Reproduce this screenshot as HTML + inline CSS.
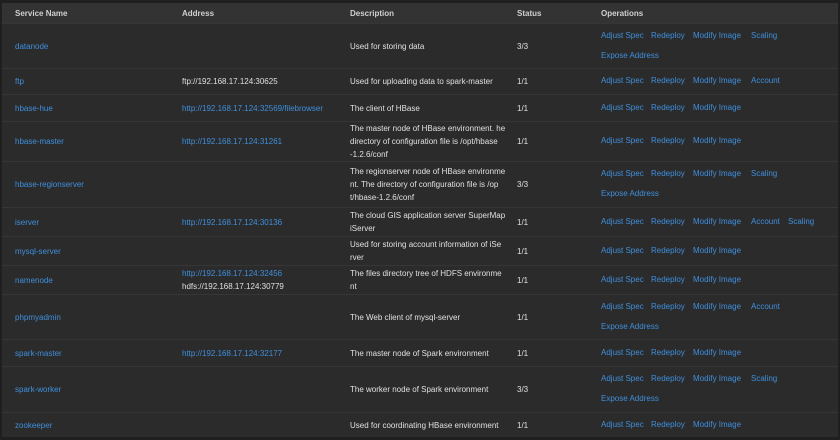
<!DOCTYPE html>
<html><head><meta charset="utf-8"><style>
*{margin:0;padding:0;box-sizing:border-box}
body{width:840px;height:440px;background:#1f1f1f;font-family:"Liberation Sans",sans-serif;font-size:8px;color:#e0e0e0;position:relative;overflow:hidden}
.wrap{position:absolute;left:2px;top:3px;width:836px;height:434px;background:#2b2b2b}
.hdr{position:absolute;left:0;top:0;width:836px;height:20px;background:#333;font-weight:bold;color:#d0d0d0}
.row{position:absolute;left:0;width:836px;border-top:1px solid #363636}
.c{position:absolute;top:0;height:100%;display:flex;align-items:center;line-height:13px;white-space:nowrap}
.n{left:13px}.a{left:180px}.d{left:348px}.s{left:515px}.o{left:599px}
a{color:#3f8fdc;text-decoration:none}
.ops{position:absolute;left:599px;top:0;height:100%;width:237px}
.ops span{position:absolute;color:#3f8fdc;line-height:13px}
</style></head><body><div class="wrap">
<div class="hdr"><div class="c n">Service Name</div><div class="c a">Address</div><div class="c d">Description</div><div class="c s">Status</div><div class="c o">Operations</div></div>
<div id="rows"></div>
</div>
<script>
var R=[
["datanode","","Used for storing data","3/3",20,65,"S",1],
["ftp","<span style='color:#e0e0e0'>ftp://192.168.17.124:30625</span>","Used for uploading data to spark-master","1/1",65,91,"A",0],
["hbase-hue","<a>http://192.168.17.124:32569/filebrowser</a>","The client of HBase","1/1",91,118,"",0],
["hbase-master","<a>http://192.168.17.124:31261</a>","The master node of HBase environment. he<br>directory of configuration file is /opt/hbase<br>-1.2.6/conf","1/1",118,158,"",0],
["hbase-regionserver","","The regionserver node of HBase environme<br>nt. The directory of configuration file is /op<br>t/hbase-1.2.6/conf","3/3",158,204,"S",1],
["iserver","<a>http://192.168.17.124:30136</a>","The cloud GIS application server SuperMap<br>iServer","1/1",204,233,"AS",0],
["mysql-server","","Used for storing account information of iSe<br>rver","1/1",233,262,"",0],
["namenode","<a>http://192.168.17.124:32456</a><br>hdfs://192.168.17.124:30779","The files directory tree of HDFS environme<br>nt","1/1",262,291,"",0],
["phpmyadmin","","The Web client of mysql-server","1/1",291,336,"A",1],
["spark-master","<a>http://192.168.17.124:32177</a>","The master node of Spark environment","1/1",336,363,"",0],
["spark-worker","","The worker node of Spark environment","3/3",363,409,"S",1],
["zookeeper","","Used for coordinating HBase environment","1/1",409,434,"",0]];
var h="";
R.forEach(function(r){
 var H=r[5]-r[4],two=r[7],y1=two?Math.round(H/2-10)-8:Math.round(H/2)-8;
 var ops="<span style='left:0;top:"+y1+"px'>Adjust Spec</span><span style='left:50px;top:"+y1+"px'>Redeploy</span><span style='left:92px;top:"+y1+"px'>Modify Image</span>";
 if(r[6]=="S")ops+="<span style='left:150px;top:"+y1+"px'>Scaling</span>";
 if(r[6]=="A")ops+="<span style='left:150px;top:"+y1+"px'>Account</span>";
 if(r[6]=="AS")ops+="<span style='left:150px;top:"+y1+"px'>Account</span><span style='left:187px;top:"+y1+"px'>Scaling</span>";
 if(two)ops+="<span style='left:0;top:"+(y1+20)+"px'>Expose Address</span>";
 h+="<div class='row' style='top:"+r[4]+"px;height:"+H+"px'><div class='c n'><a>"+r[0]+"</a></div><div class='c a'><div>"+r[1]+"</div></div><div class='c d'><div>"+r[2]+"</div></div><div class='c s'>"+r[3]+"</div><div class='ops'>"+ops+"</div></div>";
});
document.getElementById("rows").innerHTML=h;
</script>
</body></html>
